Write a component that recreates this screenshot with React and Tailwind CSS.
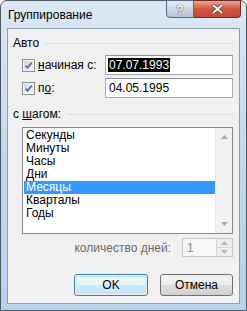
import React from "react";

const font = { fontFamily: '"Liberation Sans", Arial, sans-serif' };

function CheckBox() {
  return (
    <div className="w-[13px] h-[13px] border border-[#8e8f8f] bg-[#f4f4f4] p-[1px] shrink-0">
      <div className="w-full h-full bg-gradient-to-br from-[#d6d6d6] to-[#f6f6f6] relative">
        <svg width="11" height="11" viewBox="0 0 11 11" className="absolute -left-[1px] -top-[1px]">
          <path d="M2.5 5.6 L4.6 7.8 L8.8 2.6" fill="none" stroke="#4f6fae" strokeWidth="1.7" />
        </svg>
      </div>
    </div>
  );
}

function Arrow({ up, color = "#a8a8a8" }) {
  return (
    <svg width="7" height="4" viewBox="0 0 7 4">
      <path d={up ? "M0 4 L3.5 0 L7 4 Z" : "M0 0 L3.5 4 L7 0 Z"} fill={color} />
    </svg>
  );
}

function SectionLabel({ children, underline, rest, mt }) {
  return (
    <div className={`flex items-center pl-[5px] pr-[6px] h-[15px] ${mt}`}>
      <span className="text-[12px] leading-[15px] text-black whitespace-nowrap">
        {children}
        {underline && <span className="underline">{underline}</span>}
        {rest}
      </span>
      <div className="flex-1 h-px bg-[#d5dfe5] ml-[6px]" />
    </div>
  );
}

const items = ["Секунды", "Минуты", "Часы", "Дни", "Месяцы", "Кварталы", "Годы"];

export default function App() {
  return (
    <div style={font} className="w-[247px] h-[311px] bg-white">
      <div className="w-[247px] h-[311px] rounded-t-[7px] border border-[#4d5866] bg-gradient-to-b from-[#dce8f5] via-[#c3d8ee] to-[#b8d1ec] flex flex-col px-[6px] pb-[6px]">
        <div className="h-[27px] flex items-start relative">
          <span className="text-[12px] text-black mt-[7px] ml-[1px] leading-[15px]">Группирование</span>
          <div className="ml-auto flex -mt-px -mr-[1px]">
            <div className="w-[28px] h-[18px] border border-[#5b6a7e] rounded-bl-[4px] bg-gradient-to-b from-[#e3ebf4] via-[#cdd9e6] to-[#b3c4d8] flex items-center justify-center">
              <span className="text-[13px] font-bold text-white leading-none" style={{ textShadow: "0 0 1px #333, 0 0 1px #333" }}>?</span>
            </div>
            <div className="w-[47px] h-[18px] border border-[#6b2a22] border-l-0 rounded-br-[4px] bg-gradient-to-b from-[#e8a493] via-[#d2553f] to-[#c44a33] flex items-center justify-center">
              <svg width="13" height="10" viewBox="0 0 13 10">
                <path d="M2 1 L11 9 M11 1 L2 9" stroke="#3a3a3a" strokeWidth="3.4" />
                <path d="M2 1 L11 9 M11 1 L2 9" stroke="#ffffff" strokeWidth="2" />
              </svg>
            </div>
          </div>
        </div>

        <div className="flex-1 border border-[#8c9db2] bg-[#f0f0f0] flex flex-col">
          <SectionLabel mt="mt-[7px]">Авто</SectionLabel>

          <div className="flex items-center pl-[14px] pr-[6px] h-[20px] mt-[4px]">
            <CheckBox />
            <span className="text-[12px] ml-[3px]">
              <span className="underline">н</span>ачиная с:
            </span>
            <div className="ml-auto w-[128px] h-[20px] border border-[#abadb3] border-t-[#8f949c] bg-white flex items-center pl-[2px]">
              <span className="text-[12px] leading-[14px] bg-black text-white px-px">07.07.1993</span>
            </div>
          </div>

          <div className="flex items-center pl-[14px] pr-[6px] h-[20px] mt-[3px]">
            <CheckBox />
            <span className="text-[12px] ml-[3px]">
              п<span className="underline">о</span>:
            </span>
            <div className="ml-auto w-[128px] h-[20px] border border-[#abadb3] border-t-[#8f949c] bg-white flex items-center pl-[3px]">
              <span className="text-[12px] leading-[14px]">04.05.1995</span>
            </div>
          </div>

          <SectionLabel mt="mt-[9px]" underline="ш" rest="агом:">с </SectionLabel>

          <div className="ml-[14px] mr-[6px] mt-[5px] h-[107px] border border-[#828790] bg-white flex">
            <div className="flex-1 pt-px pl-px">
              {items.map((it) => (
                <div
                  key={it}
                  className={`h-[13px] leading-[13px] text-[12px] pl-[2px] ${it === "Месяцы" ? "bg-[#3399ff] text-white" : "text-black"}`}
                >
                  {it}
                </div>
              ))}
            </div>
            <div className="w-[17px] bg-[#f2f2f2] border-l border-[#e6e6e6] flex flex-col items-center justify-between py-[7px]">
              <Arrow up />
              <Arrow />
            </div>
          </div>

          <div className="flex items-center justify-end pr-[6px] mt-[4px] h-[19px]">
            <span className="text-[12px] text-[#6d6d6d] mr-[11px]">количество дней:</span>
            <div className="w-[51px] h-[19px] border border-[#c2c6cc] bg-[#f7f7f7] flex">
              <div className="flex-1 flex items-center pl-[4px] text-[12px] text-[#8d8d8d]">1</div>
              <div className="w-[16px] flex flex-col border-l border-[#d6d6d6]">
                <div className="flex-1 flex items-center justify-center border-b border-[#d6d6d6] bg-[#efefef]">
                  <Arrow up color="#b5b5b5" />
                </div>
                <div className="flex-1 flex items-center justify-center bg-[#efefef]">
                  <Arrow color="#b5b5b5" />
                </div>
              </div>
            </div>
          </div>

          <div className="flex justify-end gap-[12px] pr-[6px] mt-[17px]">
            <div className="w-[74px] h-[22px] rounded-[3px] border border-[#3c7fb1] p-px">
              <div className="w-full h-full rounded-[2px] border border-[#bfe6fb] bg-[linear-gradient(to_bottom,#f2f9fd_0%,#e4f3fc_50%,#cfebfa_51%,#c2e4f7_100%)] flex items-center justify-center text-[12px]">
                OK
              </div>
            </div>
            <div className="w-[73px] h-[22px] rounded-[3px] border border-[#707070] bg-[linear-gradient(to_bottom,#f2f2f2_0%,#ebebeb_50%,#dddddd_51%,#cfcfcf_100%)] flex items-center justify-center text-[12px]">
              Отмена
            </div>
          </div>
        </div>
      </div>
    </div>
  );
}
